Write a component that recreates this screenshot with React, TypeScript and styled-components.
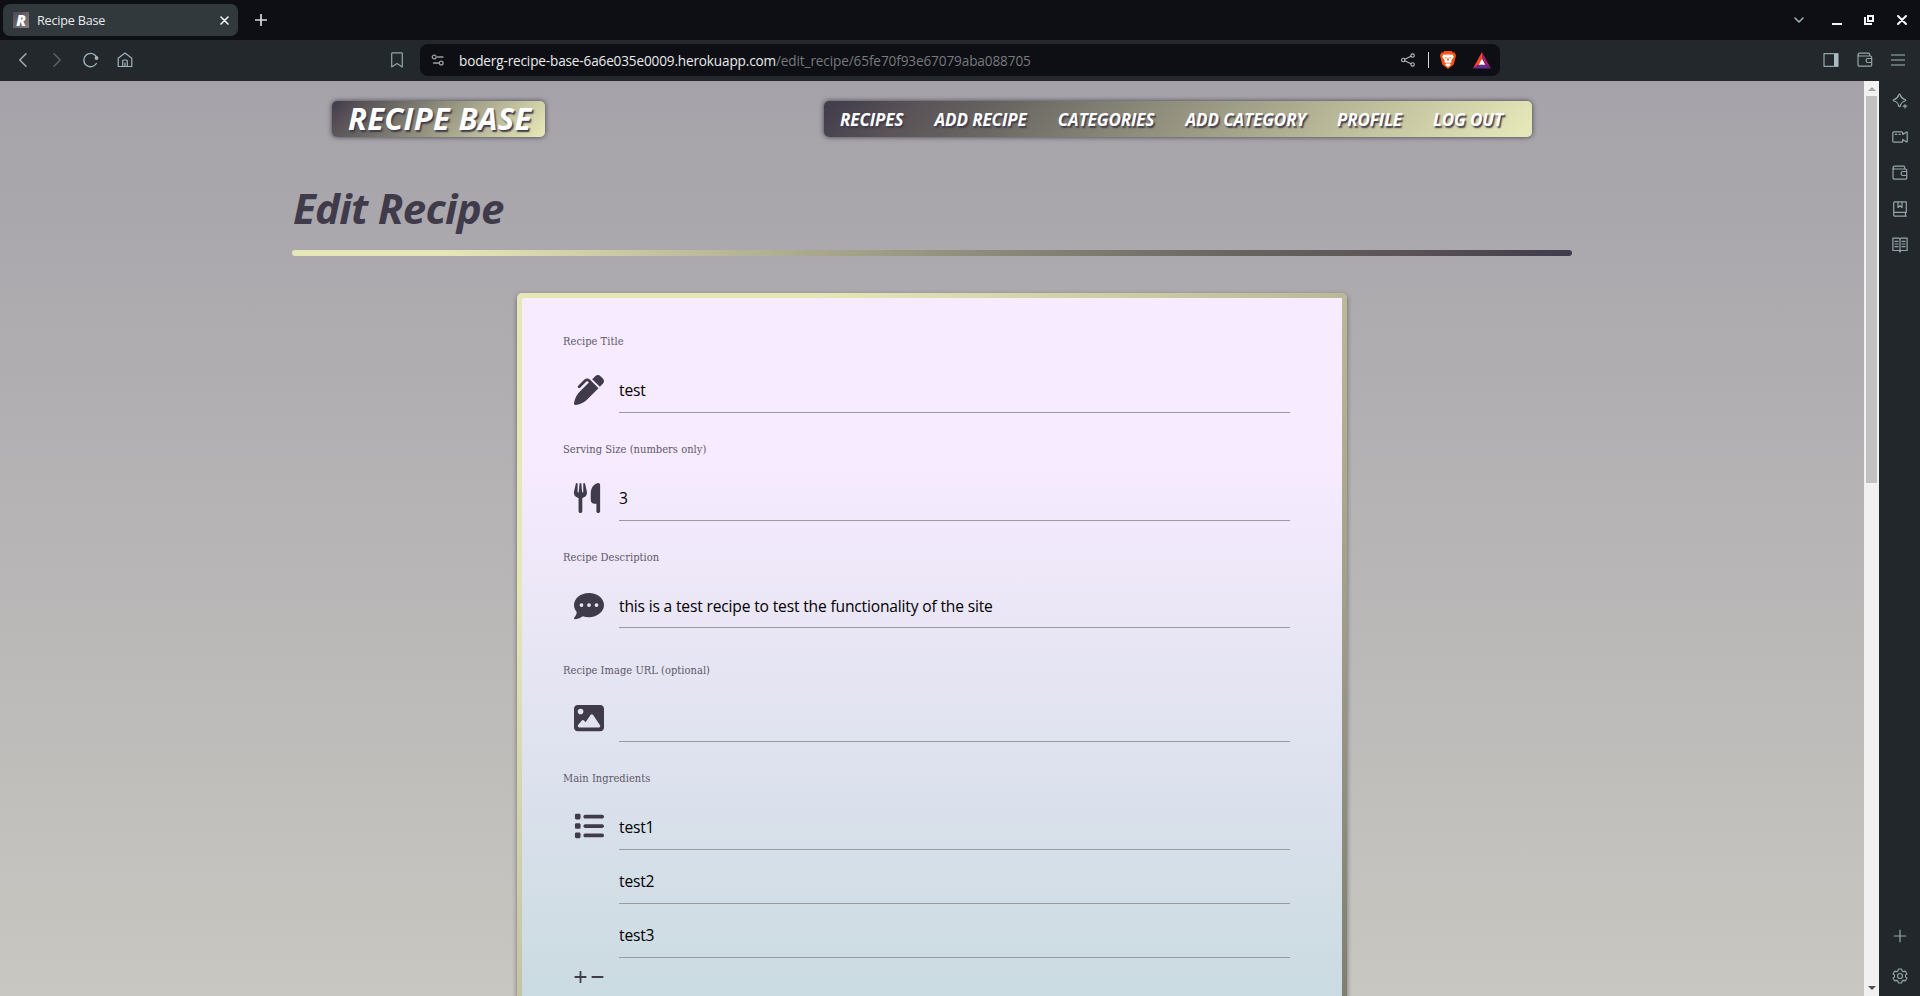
import React from 'react';
import styled, { createGlobalStyle } from 'styled-components';
import { FaPenClip, FaUtensils, FaCommentDots, FaImage, FaList } from 'react-icons/fa6';

const sans = '"Open Sans", "Noto Sans", sans-serif';
const ink = '#403b4b';
const fade = '#403b4b 0%, #5b5357 13%, #676461 24%, #8b8979 44%, #e6e7b8 98%';
const fadeBack = '#e6e7b8 0%, #e6e7b8 12%, #8b8979 55%, #66635f 75%, #5b5357 87%, #403b4b 100%';

const Global = createGlobalStyle`
  * { box-sizing: border-box; }
  body { margin: 0; overflow: hidden; font-family: ${sans}; }
`;

const Browser = styled.div`
  display: flex;
  flex-direction: column;
  width: 1920px;
  height: 996px;
  overflow: hidden;
  background: #21272a;
`;

const TabStrip = styled.div`
  display: flex;
  align-items: center;
  height: 40px;
  padding-left: 3px;
  background: #0d0f14;
`;

const Tab = styled.div`
  display: flex;
  align-items: center;
  width: 235px;
  height: 32px;
  padding: 0 9px 0 10px;
  border-radius: 7px;
  background: #31393d;
  color: #e8eaeb;
  font-size: 12.6px;
  letter-spacing: -0.2px;
  white-space: nowrap;
`;

const Favicon = styled.span`
  width: 16px;
  height: 16px;
  margin-right: 8px;
  background: linear-gradient(135deg, #4c4656, #857f80);
  color: #fff;
  font: italic 800 15px/16px ${sans};
  text-align: center;
`;

const Spacer = styled.span<{ $w?: number }>`
  flex: ${(p) => (p.$w ? `0 0 ${p.$w}px` : '1')};
`;

const Icon = styled.svg<{ $color?: string; $weight?: number }>`
  display: block;
  flex: none;
  fill: none;
  stroke: ${(p) => p.$color ?? '#96a5ab'};
  stroke-width: ${(p) => p.$weight ?? 1.2};
  stroke-linecap: round;
  stroke-linejoin: round;
`;

const Toolbar = styled.div`
  display: flex;
  align-items: center;
  height: 41px;
  padding-bottom: 1px;
  background: #22282b;
`;

const Address = styled.div`
  display: flex;
  align-items: center;
  width: 1080px;
  height: 32px;
  padding: 0 9px 0 10px;
  border-radius: 8px;
  background: #0d0f14;
  color: #e9ebec;
  font-size: 13.6px;
  letter-spacing: -0.16px;
  white-space: nowrap;
`;

const Path = styled.span`
  color: #76797d;
  letter-spacing: -0.12px;
`;

const Divider = styled.span`
  width: 1px;
  height: 16px;
  background: #d4d9dc;
`;

const Body = styled.div`
  display: flex;
  height: 915px;
`;

const Page = styled.main`
  width: 1864px;
  height: 915px;
  overflow: hidden;
  background: linear-gradient(#a5a2a9, #c8c7c1);
`;

const Scrollbar = styled.div`
  display: flex;
  flex-direction: column;
  align-items: center;
  width: 15px;
  background: #f1f1f1;
`;

const ArrowUp = styled.span`
  height: 10px;
  margin-bottom: 5px;
  border: 4px solid transparent;
  border-top-width: 6px;
  border-bottom-color: #a3a3a3;
`;

const Thumb = styled.span`
  width: 11px;
  height: 387px;
  margin-bottom: auto;
  background: #c1c1c1;
`;

const ArrowDown = styled.span`
  border: 4px solid transparent;
  border-top-color: #505050;
  margin-bottom: 2px;
`;

const SideBar = styled.aside`
  display: flex;
  flex-direction: column;
  align-items: center;
  width: 41px;
  padding: 12px 0;
  gap: 20px;
  background: #21272a;
`;

const SideIcon = styled.span<{ $last?: boolean }>`
  display: grid;
  place-items: center;
  width: 18px;
  height: 16px;
  margin-top: ${(p) => (p.$last ? 'auto' : '0')};
  margin-bottom: ${(p) => (p.$last ? '4px' : '0')};
`;

const Header = styled.header`
  display: flex;
  justify-content: space-between;
  width: 1200px;
  margin: 20px auto 0;
`;

const Plate = styled.div`
  display: flex;
  align-items: center;
  height: 36px;
  border-radius: 5px;
  background: linear-gradient(135deg, ${fade});
  box-shadow: 0 0 5px rgba(30, 26, 40, 0.75);
  color: #fff;
  font-style: italic;
  font-weight: 700;
  text-shadow: 1.5px 1.5px 1.5px ${ink};
  white-space: nowrap;
`;

const Brand = styled(Plate)`
  width: 213px;
  padding: 0 0 2px 16px;
  font-size: 31px;
  letter-spacing: 0.3px;
`;

const Nav = styled(Plate).attrs({ as: 'nav' })`
  width: 708px;
  padding: 0 0 0 16px;
  gap: 31px;
  font-size: 17px;
  letter-spacing: -0.08px;
`;

const Title = styled.h1`
  width: 1280px;
  margin: 46px auto 17px;
  padding-left: 1px;
  color: ${ink};
  font: italic 700 42px/50px ${sans};
  letter-spacing: -0.7px;
`;

const Rule = styled.div`
  width: 1280px;
  height: 6px;
  margin: 0 auto 37px;
  border-radius: 3px;
  background: linear-gradient(90deg, ${fadeBack});
`;

const Frame = styled.section`
  width: 830px;
  height: 1700px;
  margin: 0 auto;
  padding: 5px;
  border-radius: 5px;
  background: linear-gradient(135deg, ${fadeBack});
  box-shadow: 0 2px 5px rgba(30, 26, 40, 0.5);
`;

const Form = styled.form`
  height: 1690px;
  padding: 34px 52px 0 41px;
  background: linear-gradient(#f7ebff 0px, #f7ebff 165px, #cadbe1 700px);
`;

const Field = styled.div<{ $gap?: number }>`
  margin-bottom: ${(p) => p.$gap ?? 27}px;
`;

const Label = styled.div`
  height: 20px;
  margin-bottom: 12px;
  color: #5d5768;
  font: 11px/20px "DejaVu Serif Condensed", "DejaVu Serif", serif;
  letter-spacing: 0.04px;
`;

const Row = styled.div`
  display: flex;
  padding-left: 11px;
`;

const Prefix = styled.div<{ $dx?: number; $dy?: number }>`
  width: 45px;
  padding-top: ${(p) => 11 + (p.$dy ?? 0)}px;
  color: ${ink};
  font-size: 30px;
  line-height: 0;

  svg {
    margin-left: ${(p) => p.$dx ?? 0}px;
  }
`;

const Inputs = styled.div`
  display: flex;
  flex: 1;
  flex-direction: column;
  gap: 5px;
`;

const Input = styled.div<{ $h?: number }>`
  height: ${(p) => p.$h ?? 49}px;
  padding-top: 3px;
  border-bottom: 1px solid #9a9b9e;
  color: #000;
  font-size: 15.6px;
  letter-spacing: -0.17px;
  line-height: 46px;
`;

const Buttons = styled.div`
  display: flex;
  gap: 4px;
  margin-top: -14px;
  padding-left: 11px;
`;

const nav = ['RECIPES', 'ADD RECIPE', 'CATEGORIES', 'ADD CATEGORY', 'PROFILE', 'LOG OUT'];

const fields = [
  { label: 'Recipe Title', icon: <FaPenClip />, values: ['test'] },
  { label: 'Serving Size (numbers only)', icon: <FaUtensils />, dx: -2, values: ['3'] },
  {
    label: 'Recipe Description',
    icon: <FaCommentDots />,
    values: ['this is a test recipe to test the functionality of the site'],
    height: 48,
    gap: 33,
  },
  { label: 'Recipe Image URL (optional)', icon: <FaImage />, dy: -1, values: [''] },
  { label: 'Main Ingredients', icon: <FaList />, dy: -1, values: ['test1', 'test2', 'test3'] },
];

const Wallet = () => (
  <Icon width="16" height="16" viewBox="0 0 16 16">
    <path d="M1 2.500v10.200a1.500 1.500 0 0 0 1.500 1.500h11a1.200 1.200 0 0 0 1.200-1.200V5.200A1.200 1.200 0 0 0 13.500 4h-11a1.400 1.400 0 0 1 0-2.800H11.500a1.200 1.200 0 0 1 1.200 1.200V4M14.700 6.500h-4a1.500 1.500 0 0 0-1.500 1.500v1a1.500 1.500 0 0 0 1.500 1.500h4" />
  </Icon>
);

export default function App() {
  return (
    <Browser>
      <Global />
      <TabStrip>
        <Tab>
          <Favicon>R</Favicon>
          Recipe Base
          <Spacer />
          <Icon width="9" height="9" viewBox="0 0 9 9" $color="#f2f4f5" $weight={1.6}>
            <path d="M1 1l7 7M8 1L1 8" />
          </Icon>
        </Tab>
        <Spacer $w={17} />
        <Icon width="12" height="12" viewBox="0 0 12 12" $color="#d5dadd" $weight={1.7}>
          <path d="M6 .6v10.800M.6 6h10.800" />
        </Icon>
        <Spacer />
        <Icon width="10" height="7" viewBox="0 0 10 7" $color="#9fb0b7" $weight={1.6}>
          <path d="M1 1l4 4 4-4" />
        </Icon>
        <Spacer $w={28} />
        <Icon width="10" height="10" viewBox="0 0 10 10" $color="#f4f5f6" $weight={0}>
          <path d="M0 8h10v2H0z" fill="#f4f5f6" />
        </Icon>
        <Spacer $w={22} />
        <Icon width="10" height="10" viewBox="0 0 10 10" $weight={0}>
          <path fillRule="evenodd" fill="#f4f5f6" d="M3 0h7v7H3zM5 2v3h3V2zM0 2h2v6h6v2H0z" />
        </Icon>
        <Spacer $w={23} />
        <Icon width="10" height="10" viewBox="0 0 10 10" $color="#f4f5f6" $weight={2}>
          <path d="M1 1l8 8M9 1L1 9" />
        </Icon>
        <Spacer $w={13} />
      </TabStrip>

      <Toolbar>
        <Spacer $w={18} />
        <Icon width="10" height="14" viewBox="0 0 10 14" $color="#a3b4bb" $weight={1.4}>
          <path d="M8 .8L1.800 7 8 13.200" />
        </Icon>
        <Spacer $w={24} />
        <Icon width="10" height="14" viewBox="0 0 10 14" $color="#5c6569" $weight={1.4}>
          <path d="M2 .8L8.200 7 2 13.200" />
        </Icon>
        <Spacer $w={20} />
        <Icon width="18" height="16" viewBox="0 0 18 16" $color="#a3b4bb" $weight={1.4}>
          <path d="M14 4.200A6.700 6.700 0 1 0 14.300 11.500" />
          <circle cx="14.500" cy="6" r="1.900" fill="#a3b4bb" stroke="none" />
        </Icon>
        <Spacer $w={17} />
        <Icon width="16" height="16" viewBox="0 0 16 16" $color="#a3b4bb">
          <path d="M1.200 6.200L8 1l6.800 5.200v8.300H1.200zM5.700 14.500V9a1 1 0 0 1 1-1h2.600a1 1 0 0 1 1 1v5.500M8 11v3" />
        </Icon>
        <Spacer $w={257} />
        <Icon width="14" height="16" viewBox="0 0 14 16" $color="#96a5ab">
          <path d="M2.500.8h9a.8.8 0 0 1 .8.8v13.300L7 11.500l-5.300 3.400V1.600a.8.8 0 0 1 .8-.8z" />
        </Icon>
        <Spacer $w={16} />
        <Address>
          <Icon width="16" height="14" viewBox="0 0 16 14" $color="#9a9ea2" $weight={1.3}>
            <circle cx="4.200" cy="4" r="1.900" />
            <path d="M7.500 4H13M3.500 10H9" />
            <circle cx="11.200" cy="10" r="1.900" />
          </Icon>
          <Spacer $w={13} />
          boderg-recipe-base-6a6e035e0009.herokuapp.com<Path>/edit_recipe/65fe70f93e67079aba088705</Path>
          <Spacer />
          <Icon width="14" height="14" viewBox="0 0 14 14" $color="#b3bbbf" $weight={1.1}>
            <circle cx="2.200" cy="7" r="1.700" />
            <circle cx="11.600" cy="2.600" r="1.700" />
            <circle cx="11.600" cy="11.400" r="1.700" />
            <path d="M3.800 6.300L10 3.300M3.800 7.700L10 10.700" />
          </Icon>
          <Spacer $w={13} />
          <Divider />
          <Spacer $w={11} />
          <Icon width="16" height="18" viewBox="0 0 16 18" $weight={0}>
            <path fill="#fb5113" d="M4.500 0h7l1.500 1.500 1.500-.2L16 4.500l-.5 2-1.800 7L8 18l-5.700-4.500-1.800-7L0 4.500l1.500-3.200 1.500.2z" />
            <path fill="#fff" d="M3.500 3.500l3 .3L8 3.300l1.500.5 3-.3 1.300 2.300-2.500 3.700.3 1.700-2.200 1.300L11 14l-3 2-3-2 1.600-1.500-2.200-1.300.3-1.700-2.500-3.700z" />
            <path fill="#fb5113" d="M4.300 5.800l2.500.7-.7 1zM11.700 5.800l-2.500.7.7 1zM7.500 7h1l.3 2.300L8 10l-.8-.7zM6 11l2 .9 2-.9-1 1.400H7z" />
          </Icon>
          <Spacer $w={17} />
          <Icon width="18" height="17" viewBox="0 0 18 17" $weight={0}>
            <path fill="#ff4724" d="M9 0v7L5.800 12.600 0 16.500z" />
            <path fill="#9e1f63" d="M9 0v7l3.200 5.600L18 16.500z" />
            <path fill="#662d91" d="M0 16.500l5.800-3.900h6.400L18 16.500z" />
            <path fill="#fff" d="M9 6.800l3.300 5.900H5.700z" />
          </Icon>
        </Address>
        <Spacer $w={323} />
        <Icon width="16" height="14" viewBox="0 0 16 14" $color="#96a5ab">
          <path d="M1 .7h14v12.600H1z" />
          <path d="M11 1h4v12h-4z" fill="#a9bac1" stroke="none" />
        </Icon>
        <Spacer $w={18} />
        <Wallet />
        <Spacer $w={18} />
        <Icon width="14" height="12" viewBox="0 0 14 12" $color="#a3b4bb">
          <path d="M.5 1h13M.5 6h13M.5 11h13" />
        </Icon>
      </Toolbar>

      <Body>
        <Page>
          <Header>
            <Brand>RECIPE BASE</Brand>
            <Nav>
              {nav.map((item) => (
                <span key={item}>{item}</span>
              ))}
            </Nav>
          </Header>
          <Title>Edit Recipe</Title>
          <Rule />
          <Frame>
            <Form>
              {fields.map((f) => (
                <Field key={f.label} $gap={f.gap}>
                  <Label>{f.label}</Label>
                  <Row>
                    <Prefix $dx={f.dx} $dy={f.dy}>
                      {f.icon}
                    </Prefix>
                    <Inputs>
                      {f.values.map((v) => (
                        <Input key={v} $h={f.height}>
                          {v}
                        </Input>
                      ))}
                    </Inputs>
                  </Row>
                </Field>
              ))}
              <Buttons>
                <Icon width="13" height="12" viewBox="0 0 13 12" $color={ink} $weight={1.8}>
                  <path d="M6.500.8v10.400M1.300 6h10.400" />
                </Icon>
                <Icon width="13" height="12" viewBox="0 0 13 12" $color={ink} $weight={1.8}>
                  <path d="M1.300 6h10.400" />
                </Icon>
              </Buttons>
            </Form>
          </Frame>
        </Page>
        <Scrollbar>
          <ArrowUp />
          <Thumb />
          <ArrowDown />
        </Scrollbar>
        <SideBar>
          <SideIcon>
            <Icon width="16" height="16" viewBox="0 0 16 16">
              <path d="M7.500 1c.5 0 .6.300.8 1 .7 2.700 1.500 3.500 4.700 4.500 1 .3 1 1.200 0 1.500-3.200 1-4 1.800-4.700 5-.2.900-1.400.9-1.600 0C6 9.800 5.200 9 2 8 1 7.700 1 6.800 2 6.500 5.200 5.500 6 4.700 6.700 2c.2-.7.300-1 .8-1zM13 11.500v3.500M11.200 13.200h3.600" />
            </Icon>
          </SideIcon>
          <SideIcon>
            <Icon width="16" height="12" viewBox="0 0 16 12">
              <path d="M1.800.8h7.900a1 1 0 0 1 1 1v1.700l3.500-2.300h1v9.600h-1l-3.500-2.300v1.700a1 1 0 0 1-1 1H1.800a1 1 0 0 1-1-1V1.800a1 1 0 0 1 1-1zM3.200 3.300h1.600M7 3.300h1.300" />
            </Icon>
          </SideIcon>
          <SideIcon>
            <Wallet />
          </SideIcon>
          <SideIcon>
            <Icon width="16" height="16" viewBox="0 0 16 16">
              <path d="M14.300 11.300V.9H2.700a1 1 0 0 0-1 1v12a1.200 1.200 0 0 0 1.200 1.200h11.400M1.700 12.300c0-.6.400-1 1-1h11.600M13.500 11.500v3.400M6 1v5.500l2-1.700 2 1.700V1" />
            </Icon>
          </SideIcon>
          <SideIcon>
            <Icon width="16" height="16" viewBox="0 0 16 16">
              <path d="M8 2.500L7.200 1.200H.9v12.300h6.300L8 15l.8-1.500h6.300V1.200H8.800L8 2.500V15M3 4.300h3M3 7h3M3 9.700h3M10 4.300h3M10 7h3M10 9.700h3" />
            </Icon>
          </SideIcon>
          <SideIcon $last>
            <Icon width="14" height="14" viewBox="0 0 14 14">
              <path d="M7 1.200v11.600M1.200 7h11.600" />
            </Icon>
          </SideIcon>
          <SideIcon>
            <Icon width="16" height="16" viewBox="0 0 16 16">
              <path d="M6.500 1h3l.6 1.900 1.300.8 2-.5 1.500 2.600L13.500 7.200v1.600l1.400 1.400-1.500 2.600-2-.5-1.300.8L9.500 15h-3l-.6-1.900-1.300-.8-2 .5-1.500-2.600 1.400-1.400V7.200L1.100 5.800l1.500-2.600 2 .5 1.300-.8z" />
              <circle cx="8" cy="8" r="2.500" />
            </Icon>
          </SideIcon>
        </SideBar>
      </Body>
    </Browser>
  );
}
